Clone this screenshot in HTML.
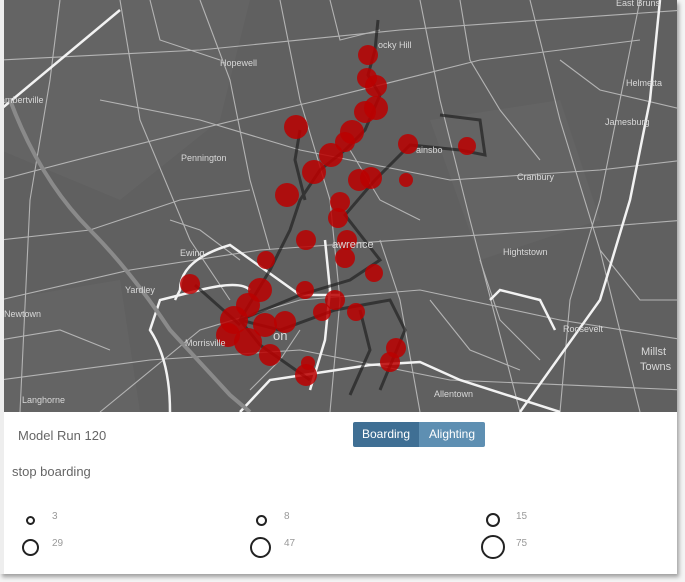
<!DOCTYPE html>
<html><head><meta charset="utf-8"><style>
html,body{margin:0;padding:0;background:#f4f4f4;width:685px;height:582px;overflow:hidden;font-family:"Liberation Sans",sans-serif}
.card{position:absolute;left:0;top:0;width:677px;height:574px;background:#fff;box-shadow:2px 3px 4px rgba(0,0,0,.35);border-left:4px solid #eee;box-sizing:border-box}
.map{position:absolute;left:0;top:0;width:673px;height:412px}
.t{position:absolute;color:#666}
.btn{position:absolute;top:422px;height:25px;line-height:25px;color:#fff;font-size:12px;text-align:center;border-radius:2px}
.c{position:absolute;border:2px solid #222;border-radius:50%;box-sizing:border-box}
.n{position:absolute;font-size:10px;color:#999}
</style></head><body>
<div class="card">
<svg class="map" viewBox="4 0 673 412" xmlns="http://www.w3.org/2000/svg">
<rect x="0" width="685" height="412" fill="#606060"/>
<g fill="#646464"><path d="M0 0 L250 0 L220 120 L120 200 L0 150Z"/><path d="M430 120 L560 100 L600 220 L480 260Z"/><path d="M0 300 L120 280 L140 412 L0 412Z"/></g>
<g fill="none" stroke="#c8c8c8" stroke-width="1.1" opacity=".8">
<path d="M120 0 L140 120 L190 240 L230 300"/><path d="M0 180 Q150 140 320 100 L480 60 L640 40"/>
<path d="M0 300 L130 270 L260 250 L400 240 L560 230 L685 220"/><path d="M60 0 L50 80 L30 200 L20 412"/>
<path d="M280 0 L300 100 L330 200 L340 300 L330 412"/><path d="M420 0 L440 100 L470 220 L520 412"/>
<path d="M530 0 L560 120 L600 250 L640 412"/><path d="M0 60 L200 50 L400 30 L685 10"/>
<path d="M100 412 L200 330 L300 300 L420 290 L560 320 L685 340"/><path d="M200 0 L230 80 L250 180 L270 250"/>
<path d="M0 380 L150 360 L300 350 L450 380 L685 390"/><path d="M640 0 L620 100 L600 200 L570 300 L560 412"/>
<path d="M100 100 L200 120 L300 150 L450 180 L600 170 L685 160"/><path d="M380 240 L400 300 L420 412"/>
<path d="M0 240 L90 230 L180 200 L250 190"/><path d="M460 0 L470 60 L500 110 L540 160"/><path d="M560 60 L600 90 L685 110"/>
<path d="M150 0 L160 40 L220 60"/><path d="M0 340 L60 330 L110 350"/><path d="M430 300 L470 350 L520 370"/>
<path d="M600 250 L640 300 L685 300"/><path d="M330 0 L340 40 L380 30"/><path d="M250 390 L280 360 L300 330"/>
<path d="M170 220 L200 230 L240 260"/><path d="M480 260 L500 320 L540 360"/><path d="M350 150 L380 200 L420 220"/>
</g>
<g fill="none" stroke="#f2f2f2" stroke-width="2.5">
<path d="M0 110 Q60 60 120 10"/><path d="M170 412 Q170 360 150 330 L160 300 L200 290 Q240 280 250 290"/>
<path d="M175 300 L180 290 Q180 260 230 245 L300 295 L340 295"/>
<path d="M240 412 L270 380 L370 365 L420 362 L460 380 L560 412"/>
<path d="M520 412 L600 300 L630 200 L650 100 L660 0"/>
<path d="M490 300 L500 290 L540 300 L555 330"/>
<path d="M310 390 L325 340 L330 290 L325 240"/>
</g>
<path d="M10 100 Q40 180 90 230 Q130 270 170 330 L230 395 L250 412" fill="none" stroke="#8a8a8a" stroke-width="4"/>
<g fill="none" stroke="#222" stroke-width="3" opacity=".7">
<path d="M378 20 L375 50 L368 75 L380 95 L365 130 L345 150 L320 170 L300 200 L290 230 L270 270 L240 320 L260 345 L310 380"/>
<path d="M240 320 L300 295 L350 280 L380 260 L345 215 L375 180 L410 145 L460 150 L485 155 L480 120 L440 115"/>
<path d="M240 325 L195 285"/><path d="M240 320 L280 330 L335 310 L390 300 L405 330 L380 390"/>
<path d="M300 130 L295 160 L305 200"/><path d="M360 310 L370 350 L350 395"/>
</g>
<g fill="#bb0000" fill-opacity=".85">
<circle cx="296" cy="127" r="12"/><circle cx="331" cy="155" r="12"/><circle cx="314" cy="172" r="12"/><circle cx="287" cy="195" r="12"/>
<circle cx="368" cy="55" r="10"/><circle cx="367" cy="78" r="10"/><circle cx="376" cy="86" r="11"/><circle cx="365" cy="112" r="11"/><circle cx="376" cy="108" r="12"/><circle cx="352" cy="132" r="12"/><circle cx="345" cy="142" r="10"/>
<circle cx="408" cy="144" r="10"/><circle cx="467" cy="146" r="9"/><circle cx="359" cy="180" r="11"/><circle cx="371" cy="178" r="11"/><circle cx="406" cy="180" r="7"/>
<circle cx="340" cy="202" r="10"/><circle cx="338" cy="218" r="10"/><circle cx="306" cy="240" r="10"/><circle cx="345" cy="258" r="10"/><circle cx="347" cy="240" r="10"/><circle cx="374" cy="273" r="9"/>
<circle cx="190" cy="284" r="10"/><circle cx="266" cy="260" r="9"/><circle cx="260" cy="290" r="12"/><circle cx="248" cy="305" r="12"/><circle cx="234" cy="320" r="14"/><circle cx="228" cy="335" r="12"/><circle cx="248" cy="342" r="14"/><circle cx="265" cy="325" r="12"/><circle cx="285" cy="322" r="11"/><circle cx="270" cy="355" r="11"/>
<circle cx="305" cy="290" r="9"/><circle cx="335" cy="300" r="10"/><circle cx="322" cy="312" r="9"/><circle cx="356" cy="312" r="9"/><circle cx="396" cy="348" r="10"/><circle cx="390" cy="362" r="10"/><circle cx="306" cy="375" r="11"/><circle cx="308" cy="363" r="7"/>
</g>
<g font-size="9" fill="#d8d8d8" font-family="Liberation Sans,sans-serif">
<text x="220" y="66">Hopewell</text><text x="181" y="161">Pennington</text><text x="0" y="103">ambertville</text><text x="180" y="256">Ewing</text><text x="125" y="293">Yardley</text><text x="4" y="317">Newtown</text><text x="185" y="346">Morrisville</text><text x="22" y="403">Langhorne</text>
<text x="378" y="48">ocky Hill</text><text x="416" y="153">ainsbo</text><text x="517" y="180">Cranbury</text><text x="503" y="255">Hightstown</text><text x="563" y="332">Roosevelt</text><text x="434" y="397">Allentown</text>
<text x="626" y="86">Helmetta</text><text x="605" y="125">Jamesburg</text><text x="616" y="6">East Bruns</text><text x="641" y="355" font-size="11">Millst</text><text x="640" y="370" font-size="11">Towns</text>
<text x="332" y="248" font-size="11">awrence</text><text x="273" y="340" font-size="13">on</text>
</g>
</svg>
</div>
<div class="t" style="left:18px;top:428px;font-size:13px">Model Run 120</div>
<div class="t" style="left:12px;top:464px;font-size:13px">stop boarding</div>
<div class="btn" style="left:353px;width:66px;background:#3f6f94;border-radius:2px 0 0 2px">Boarding</div>
<div class="btn" style="left:419px;width:66px;background:#5e8fb2;border-radius:0 2px 2px 0">Alighting</div>
<div class="c" style="left:26px;top:516px;width:9px;height:9px"></div><div class="n" style="left:52px;top:511px">3</div>
<div class="c" style="left:22px;top:539px;width:17px;height:17px"></div><div class="n" style="left:52px;top:538px">29</div>
<div class="c" style="left:256px;top:515px;width:11px;height:11px"></div><div class="n" style="left:284px;top:511px">8</div>
<div class="c" style="left:250px;top:537px;width:21px;height:21px"></div><div class="n" style="left:284px;top:538px">47</div>
<div class="c" style="left:486px;top:513px;width:14px;height:14px"></div><div class="n" style="left:516px;top:511px">15</div>
<div class="c" style="left:481px;top:535px;width:24px;height:24px"></div><div class="n" style="left:516px;top:538px">75</div>
</body></html>
